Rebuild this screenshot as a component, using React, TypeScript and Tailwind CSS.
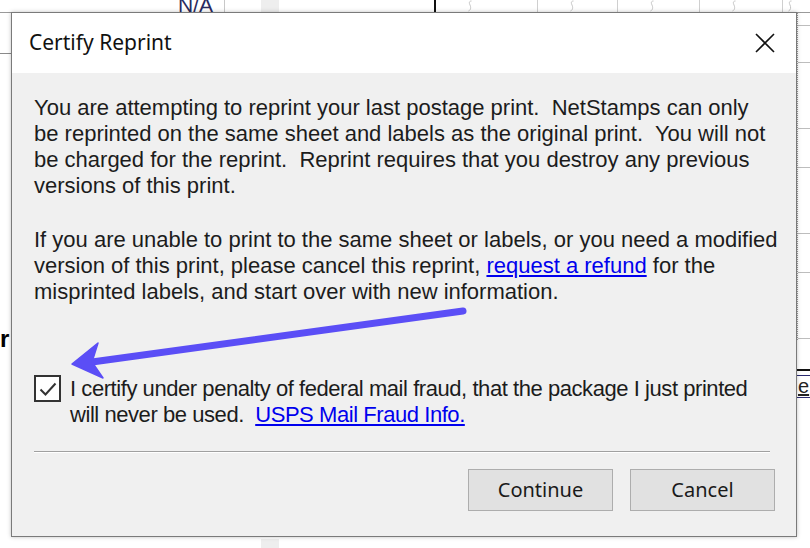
import React from 'react';

const body = { fontFamily: '"Liberation Sans", Arial, sans-serif' };
const ui = { fontFamily: '"Noto Sans", "Open Sans", sans-serif' };

function Squiggle() {
  return (
    <svg width="6" height="12" viewBox="0 0 6 12" className="shrink-0">
      <path d="M4.5 1 C2 1 2 3 3 5 C4 7 4 10 1.5 11" stroke="#c4c4c4" strokeWidth="1" fill="none" />
    </svg>
  );
}

// one cell of the table strip peeking out above the dialog
function TopCell({ width, squiggle, border = 'border-[#cfcfcf]' }: { width: number; squiggle?: boolean; border?: string }) {
  return (
    <div className={`flex h-full shrink-0 items-start border-r ${border} pl-[31px]`} style={{ width }}>
      {squiggle && <Squiggle />}
    </div>
  );
}

function Backdrop() {
  return (
    <div className="flex h-full w-full flex-col">
      {/* top strip */}
      <div className="flex h-[13px] shrink-0 items-stretch overflow-hidden border-b border-[#9a9a9a]">
        <div className="flex w-[225px] shrink-0 justify-end overflow-hidden border-r border-[#c8c8c8] pr-[11px]">
          <span className="mt-[-6px] text-[21px] leading-[22px] text-[#2a2a60]" style={body}>
            N/A
          </span>
        </div>
        <div className="w-[36px] shrink-0" />
        <div className="w-[18px] shrink-0 bg-[#eeeeee]" />
        <div className="w-[157px] shrink-0 border-r-2 border-[#111]" />
        <TopCell width={102} squiggle />
        <TopCell width={80} squiggle />
        <TopCell width={82} squiggle />
        <TopCell width={83} squiggle />
        <div className="flex flex-1 pl-[4px]">
          <Squiggle />
        </div>
      </div>

      <div className="flex flex-1">
        {/* left edge */}
        <div className="flex w-[12px] shrink-0 flex-col">
          <div className="mt-[40px] h-px bg-[#8a8a8a]" />
          <span className="mt-[271px] text-[24px] font-bold leading-[28px] text-black" style={body}>
            r
          </span>
        </div>

        <div className="flex-1" />

        {/* right edge */}
        <div className="flex w-[13px] shrink-0 flex-col">
          <div className="flex h-[327px] flex-col border-l border-dotted border-[#9a9a9a] pt-[12px]">
            {[0, 36, 65, 38, 65, 38, 65].map((gap, i) => (
              <div key={i} className="h-px bg-[#bdbdbd]" style={{ marginTop: gap }} />
            ))}
          </div>
          <div className="mt-[29px] h-[2px] bg-[#111]" />
          <div className="mt-[4px] border-b border-t border-[#2a2a70] pl-[1px]">
            <span className="block text-[20px] leading-[21px] text-[#222] underline" style={body}>
              e
            </span>
          </div>
        </div>
      </div>

      {/* below dialog */}
      <div className="flex h-[9px] shrink-0 pl-[261px]">
        <div className="w-[18px] bg-[#eeeeee]" />
      </div>
    </div>
  );
}

function CloseIcon() {
  return (
    <svg width="22" height="22" viewBox="0 0 22 22" className="text-[#111]">
      <path d="M2 2 L20 20 M20 2 L2 20" stroke="currentColor" strokeWidth="1.6" fill="none" />
    </svg>
  );
}

function Checkbox() {
  return (
    <div className="mt-[-1px] flex h-[27px] w-[27px] shrink-0 items-center justify-center border-2 border-[#333] bg-white">
      <svg width="20" height="20" viewBox="0 0 20 20">
        <path d="M2.5 10.5 L7.5 15.5 L17.5 4.5" stroke="#333" strokeWidth="2" fill="none" />
      </svg>
    </div>
  );
}

function Button({ label }: { label: string }) {
  return (
    <button
      className="flex h-[42px] w-[145px] items-center justify-center border border-[#adadad] bg-[#e1e1e1] text-[20px] text-[#1a1a1a]"
      style={ui}
    >
      {label}
    </button>
  );
}

function Arrow() {
  return (
    <svg className="pointer-events-none absolute left-0 top-0" width="810" height="548" viewBox="0 0 810 548">
      <line x1="463" y1="311" x2="92" y2="362" stroke="#5b4ef6" strokeWidth="7" strokeLinecap="round" />
      <path d="M72 364 L98 343 L92 362 L103 378 Z" fill="#5b4ef6" stroke="#5b4ef6" strokeWidth="1.5" strokeLinejoin="round" />
    </svg>
  );
}

export default function App() {
  return (
    <div className="relative h-[548px] w-[810px] overflow-hidden bg-white">
      <Backdrop />

      {/* the dialog window floats over the page behind it */}
      <div className="absolute left-[11px] top-[12px] flex h-[525px] w-[786px] flex-col border border-[#7a7a7a] bg-[#f0f0f0] shadow-[0_0_4px_rgba(0,0,0,0.25)]">
        <div className="flex h-[60px] shrink-0 items-center justify-between bg-white pl-[17px] pr-[20px]">
          <span className="text-[21px] text-[#111]" style={ui}>
            Certify Reprint
          </span>
          <CloseIcon />
        </div>

        <div className="flex flex-1 flex-col pl-[22px] pr-[21px] pt-[22px] text-[22px] leading-[26px] text-[#1c1c1c]" style={body}>
          <div className="whitespace-pre">
            <div>You are attempting to reprint your last postage print.  NetStamps can only</div>
            <div>be reprinted on the same sheet and labels as the original print.  You will not</div>
            <div>be charged for the reprint.  Reprint requires that you destroy any previous</div>
            <div>versions of this print.</div>
          </div>

          <div className="mt-[28px] whitespace-pre">
            <div>If you are unable to print to the same sheet or labels, or you need a modified</div>
            <div>
              version of this print, please cancel this reprint,{' '}
              <span className="text-[#0000ee] underline">request a refund</span> for the
            </div>
            <div>misprinted labels, and start over with new information.</div>
          </div>

          <div className="mt-[71px] flex gap-[9px]">
            <Checkbox />
            <div className="whitespace-pre tracking-[-0.02em]">
              <div>I certify under penalty of federal mail fraud, that the package I just printed</div>
              <div>
                will never be used.  <span className="text-[#0000ee] underline">USPS Mail Fraud Info.</span>
              </div>
            </div>
          </div>

          <div className="mr-[5px] mt-[23px] border-b border-t border-b-white border-t-[#a0a0a0]" />

          <div className="mt-[16px] flex justify-end gap-[17px]">
            <Button label="Continue" />
            <Button label="Cancel" />
          </div>
        </div>
      </div>

      <Arrow />
    </div>
  );
}
